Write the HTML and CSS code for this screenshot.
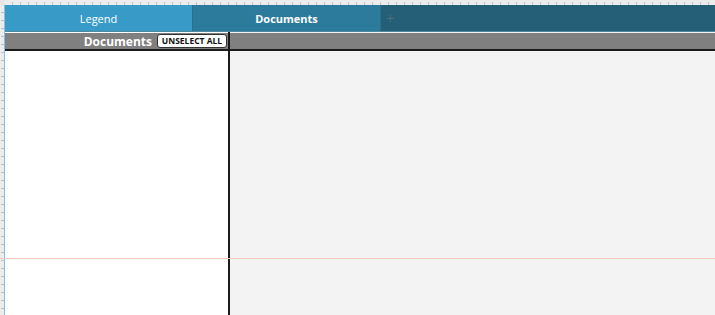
FILE: index.html
```html
<!DOCTYPE html>
<html lang="en">
<head>
  <meta charset="UTF-8">
  <title>Documents</title>
  <link rel="stylesheet" href="styles.css">
</head>
<body>
  <div class="frame">
    <div class="corner"></div>
    <div class="ruler-top"></div>
    <div class="ruler-left"></div>
    <div class="app">
      <div class="tabs">
        <div class="tab tab-legend">Legend</div>
        <div class="tab tab-docs">Documents</div>
        <div class="tab-add">+</div>
      </div>
      <div class="panels">
        <div class="side">
          <div class="side-head">
            <span class="side-title">Documents</span>
            <button class="unselect">UNSELECT ALL</button>
          </div>
          <div class="side-body"></div>
        </div>
        <div class="main">
          <div class="main-head"></div>
          <div class="main-body"></div>
        </div>
      </div>
    </div>
    <div class="guide"></div>
  </div>
</body>
</html>
```
FILE: styles.css
```css
body {
  margin: 0;
  font-family: 'Open Sans', 'Noto Sans', sans-serif;
  background: #f3f3f3;
}
.frame {
  position: relative;
  display: grid;
  grid-template-columns: 5px 1fr;
  grid-template-rows: 5px 1fr;
  width: 715px;
  height: 315px;
  overflow: hidden;
}
.corner {
  background: #e6e6e6;
}
.ruler-top {
  background:
    repeating-linear-gradient(90deg, transparent 0 7px, #b9c3d0 7px 8px) bottom / 100% 3px no-repeat,
    #ececec;
}
.ruler-left {
  border-right: 1px solid #86bde6;
  background:
    repeating-linear-gradient(180deg, transparent 0 7px, #b9c3d0 7px 8px) right / 3px 100% no-repeat,
    #ececec;
}
.app {
  display: flex;
  flex-direction: column;
}
.tabs {
  display: flex;
  height: 26px;
  background: #245e77;
  border-bottom: 1px solid #4f8aa3;
}
.tab {
  width: 187px;
  display: flex;
  align-items: center;
  justify-content: center;
  color: #fff;
  font-size: 11px;
}
.tab-legend {
  background: #389bc7;
}
.tab-docs {
  background: #2c7b9c;
  font-weight: bold;
  border-left: 1px solid #2a6f8c;
  border-right: 1px solid #2a6f8c;
}
.tab-add {
  width: 18px;
  display: flex;
  align-items: center;
  justify-content: center;
  color: #4f6f7c;
  font-size: 15px;
}
.panels {
  flex: 1;
  display: flex;
}
.side {
  width: 223px;
  display: flex;
  flex-direction: column;
  background: #fff;
  border-right: 2px solid #1b1b1b;
}
.side-head, .main-head {
  height: 16px;
  margin-top: 1px;
  background: #808080;
  border-bottom: 2px solid #1b1b1b;
}
.side-head {
  display: flex;
  align-items: center;
  justify-content: flex-end;
  gap: 5px;
  padding-right: 1px;
}
.side-title {
  color: #fff;
  font-weight: bold;
  font-size: 12px;
}
.unselect {
  height: 14px;
  width: 70px;
  padding: 0;
  background: #fff;
  border: 1px solid #333;
  border-radius: 3px;
  font-family: inherit;
  font-weight: bold;
  font-size: 8.5px;
  line-height: 12px;
  color: #111;
}
.side-body {
  flex: 1;
}
.main {
  flex: 1;
  display: flex;
  flex-direction: column;
}
.main-body {
  flex: 1;
  background: #f3f3f3;
}
.guide {
  position: absolute;
  left: 0;
  right: 0;
  top: 258px;
  height: 1px;
  background: #f6c9c0;
}
```
